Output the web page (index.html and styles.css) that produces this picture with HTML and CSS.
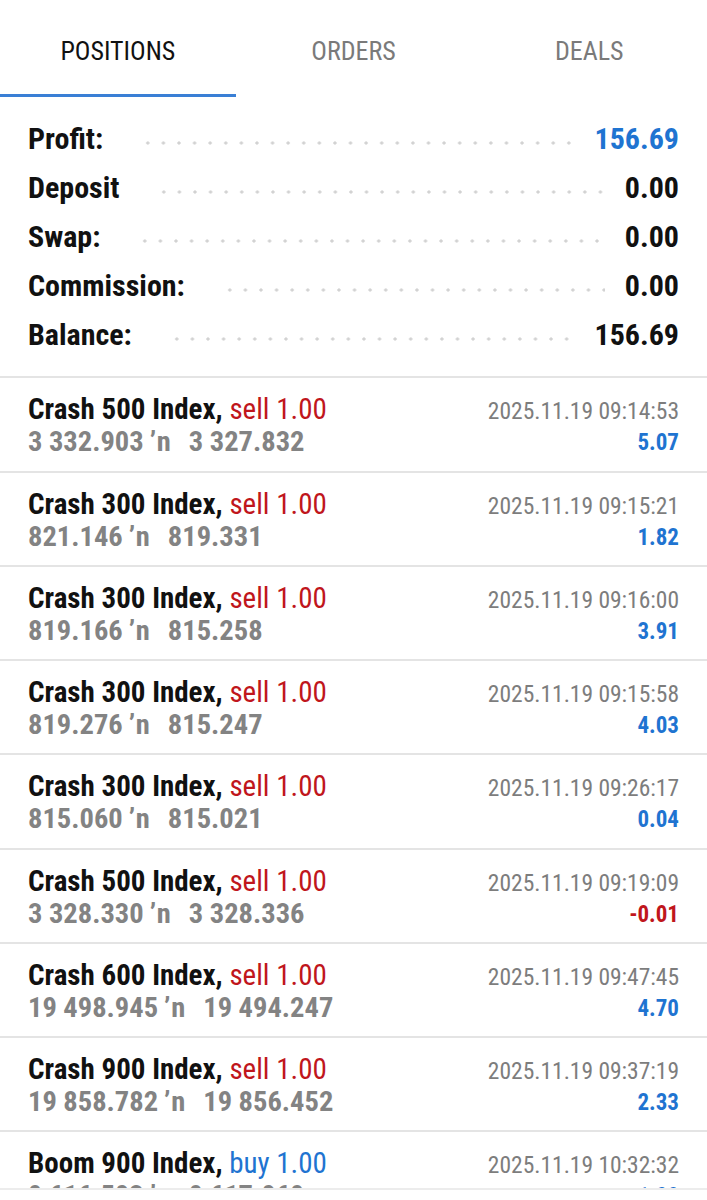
FILE: index.html
```html
<!DOCTYPE html>
<html lang="en">
<head>
    <meta charset="UTF-8">
    <meta name="viewport" content="width=device-width, initial-scale=1.0">
    <title>Trade</title>
    <link rel="stylesheet" href="styles.css">
</head>
<body>
    <div class="tabs">
        <div class="tab active">POSITIONS</div>
        <div class="tab">ORDERS</div>
        <div class="tab">DEALS</div>
    </div>

    <div class="summary">
        <div class="sum-row"><span class="label">Profit:</span><span class="dots"></span><span class="value blue">156.69</span></div>
        <div class="sum-row"><span class="label">Deposit</span><span class="dots"></span><span class="value">0.00</span></div>
        <div class="sum-row"><span class="label">Swap:</span><span class="dots"></span><span class="value">0.00</span></div>
        <div class="sum-row"><span class="label">Commission:</span><span class="dots"></span><span class="value">0.00</span></div>
        <div class="sum-row"><span class="label">Balance:</span><span class="dots"></span><span class="value">156.69</span></div>
    </div>

    <div class="positions">
        <div class="pos">
            <div class="pos-left">
                <div class="symbol">Crash 500 Index, <span class="sell">sell 1.00</span></div>
                <div class="prices">3 332.903<span class="arr">ʼn</span>3 327.832</div>
            </div>
            <div class="pos-right">
                <div class="time">2025.11.19 09:14:53</div>
                <div class="profit">5.07</div>
            </div>
        </div>
        <div class="pos">
            <div class="pos-left">
                <div class="symbol">Crash 300 Index, <span class="sell">sell 1.00</span></div>
                <div class="prices">821.146<span class="arr">ʼn</span>819.331</div>
            </div>
            <div class="pos-right">
                <div class="time">2025.11.19 09:15:21</div>
                <div class="profit">1.82</div>
            </div>
        </div>
        <div class="pos">
            <div class="pos-left">
                <div class="symbol">Crash 300 Index, <span class="sell">sell 1.00</span></div>
                <div class="prices">819.166<span class="arr">ʼn</span>815.258</div>
            </div>
            <div class="pos-right">
                <div class="time">2025.11.19 09:16:00</div>
                <div class="profit">3.91</div>
            </div>
        </div>
        <div class="pos">
            <div class="pos-left">
                <div class="symbol">Crash 300 Index, <span class="sell">sell 1.00</span></div>
                <div class="prices">819.276<span class="arr">ʼn</span>815.247</div>
            </div>
            <div class="pos-right">
                <div class="time">2025.11.19 09:15:58</div>
                <div class="profit">4.03</div>
            </div>
        </div>
        <div class="pos">
            <div class="pos-left">
                <div class="symbol">Crash 300 Index, <span class="sell">sell 1.00</span></div>
                <div class="prices">815.060<span class="arr">ʼn</span>815.021</div>
            </div>
            <div class="pos-right">
                <div class="time">2025.11.19 09:26:17</div>
                <div class="profit">0.04</div>
            </div>
        </div>
        <div class="pos">
            <div class="pos-left">
                <div class="symbol">Crash 500 Index, <span class="sell">sell 1.00</span></div>
                <div class="prices">3 328.330<span class="arr">ʼn</span>3 328.336</div>
            </div>
            <div class="pos-right">
                <div class="time">2025.11.19 09:19:09</div>
                <div class="profit loss">-0.01</div>
            </div>
        </div>
        <div class="pos">
            <div class="pos-left">
                <div class="symbol">Crash 600 Index, <span class="sell">sell 1.00</span></div>
                <div class="prices">19 498.945<span class="arr">ʼn</span>19 494.247</div>
            </div>
            <div class="pos-right">
                <div class="time">2025.11.19 09:47:45</div>
                <div class="profit">4.70</div>
            </div>
        </div>
        <div class="pos">
            <div class="pos-left">
                <div class="symbol">Crash 900 Index, <span class="sell">sell 1.00</span></div>
                <div class="prices">19 858.782<span class="arr">ʼn</span>19 856.452</div>
            </div>
            <div class="pos-right">
                <div class="time">2025.11.19 09:37:19</div>
                <div class="profit">2.33</div>
            </div>
        </div>
        <div class="pos">
            <div class="pos-left">
                <div class="symbol">Boom 900 Index, <span class="buy">buy 1.00</span></div>
                <div class="prices">9 616.503<span class="arr">ʼn</span>9 617.069</div>
            </div>
            <div class="pos-right">
                <div class="time">2025.11.19 10:32:32</div>
                <div class="profit">1.00</div>
            </div>
        </div>
    </div>

    <div class="bottom-bar"></div>
</body>
</html>
```

FILE: styles.css
```css
body {
    margin: 0;
    font-family: "Roboto Condensed", "Liberation Sans Narrow", "DejaVu Sans Condensed", Roboto, sans-serif;
    background-color: #fff;
    color: #111;
    overflow: hidden;
}

.tabs {
    display: flex;
    height: 97px;
}

.tab {
    flex: 1;
    display: flex;
    align-items: center;
    justify-content: center;
    box-sizing: border-box;
    padding-top: 8px;
    height: 97px;
    font-size: 26px;
    color: #7a7a7a;
    border-bottom: 3px solid transparent;
}

.tab.active {
    color: #111;
    border-bottom-color: #3a7fd5;
}

.summary {
    padding: 17px 28px 17px 28px;
    border-bottom: 2px solid #e4e4e4;
}

.sum-row {
    display: flex;
    align-items: center;
    height: 49.1px;
    font-size: 30px;
    font-weight: bold;
}

.dots {
    flex: 1;
    height: 4px;
    margin: 8px 20px 0 37px;
    background-image: radial-gradient(circle, #d2d2d2 1.4px, transparent 1.8px);
    background-size: 15.6px 4px;
    background-repeat: repeat-x;
}

.value {
    color: #111;
}

.blue {
    color: #1f74d1;
}

.pos {
    display: flex;
    justify-content: space-between;
    height: 92.25px;
    padding: 0 28px;
    border-bottom: 2px solid #e4e4e4;
}

.pos-left,
.pos-right {
    display: flex;
    flex-direction: column;
    padding-top: 15px;
}

.pos-right {
    align-items: flex-end;
    padding-top: 18px;
}

.symbol {
    font-size: 29px;
    font-weight: bold;
    line-height: 33px;
    white-space: nowrap;
}

.sell {
    font-weight: normal;
    color: #c0161c;
}

.buy {
    font-weight: normal;
    color: #1f74d1;
}

.prices {
    font-size: 28.5px;
    font-weight: bold;
    color: #838383;
    line-height: 32px;
    white-space: nowrap;
}

.arr {
    letter-spacing: 1px;
    margin: 0 17px 0 6px;
}

.time {
    font-size: 23.5px;
    color: #7d7d7d;
    line-height: 30px;
}

.profit {
    font-size: 23px;
    font-weight: bold;
    color: #1f74d1;
    line-height: 34px;
}

.profit.loss {
    color: #c0161c;
}

.bottom-bar {
    position: fixed;
    left: 0;
    right: 0;
    bottom: 0;
    height: 10px;
    background-color: #fff;
    border-top: 2px solid #ececec;
}
```
